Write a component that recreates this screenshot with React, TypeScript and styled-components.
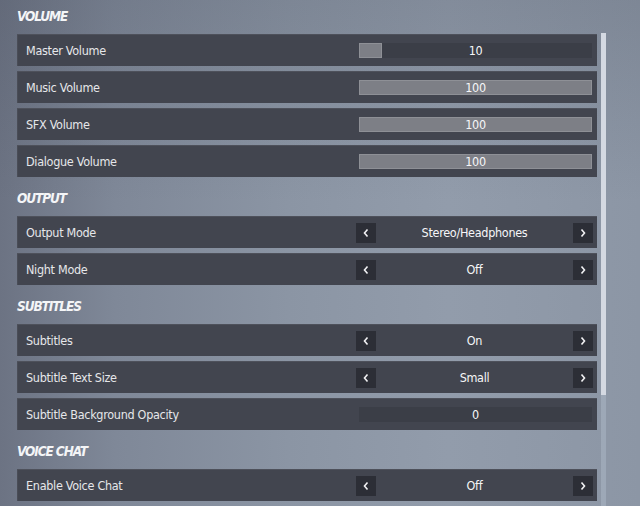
import React from 'react';
import styled, { createGlobalStyle } from 'styled-components';

const GlobalStyle = createGlobalStyle`
    html, body {
        margin: 0;
        padding: 0;
        width: 640px;
        height: 506px;
        overflow: hidden;
    }
    body {
        font-family: 'DejaVu Sans Condensed', 'DejaVu Sans', sans-serif;
        font-stretch: condensed;
    }
`;

const Page = styled.div`
    width: 640px;
    height: 506px;
    box-sizing: border-box;
    padding-left: 17px;
    display: flex;
    overflow: hidden;
    background:
        linear-gradient(180deg, rgba(60, 66, 80, 0.18) 0%, rgba(60, 66, 80, 0) 40%),
        linear-gradient(90deg, #6c7383 0%, #7f8898 18%, #8b95a4 45%, #929cab 70%, #8c96a5 100%);
`;

const Content = styled.div`
    width: 580px;
    display: flex;
    flex-direction: column;
`;

const Section = styled.section`
    display: flex;
    flex-direction: column;
    gap: 5px;

    & + & {
        margin-top: 5px;
    }
`;

const Heading = styled.h2`
    margin: 0 0 -5px;
    height: 34px;
    padding-bottom: 2px;
    box-sizing: border-box;
    display: flex;
    align-items: center;
    font-size: 13.5px;
    font-weight: 700;
    font-style: italic;
    letter-spacing: -1.1px;
    color: #f4f5f7;
    text-transform: uppercase;
`;

const Row = styled.div`
    height: 32px;
    box-sizing: border-box;
    display: flex;
    align-items: center;
    padding: 0 4px 0 9px;
    background: #42454f;
    border-top: 1px solid #4e515b;
    box-shadow: inset 1px 0 0 #4a4d57;
`;

const Label = styled.span`
    flex: 1;
    font-size: 12.5px;
    letter-spacing: -0.3px;
    color: #e6e7ea;
`;

const Control = styled.div`
    width: 237px;
    height: 20px;
    display: flex;
    align-items: center;
`;

const Track = styled.div`
    position: relative;
    flex: 1;
    margin: 0 1px 0 3px;
    height: 15px;
    background: #3b3e47;
    display: flex;
    align-items: center;
    justify-content: center;
`;

const Fill = styled.div`
    position: absolute;
    left: 0;
    top: 0;
    bottom: 0;
    background: #7d7f86;
    box-shadow: inset 0 0 0 1px #8e9096;
`;

const Value = styled.span<{ $flex?: boolean }>`
    position: relative;
    ${(p) => (p.$flex ? 'flex: 1; text-align: center;' : '')}
    font-size: 12.5px;
    letter-spacing: -0.3px;
    color: #f6f6f8;
`;

const ArrowButton = styled.div`
    width: 20px;
    height: 20px;
    background: #2c2e36;
    display: flex;
    align-items: center;
    justify-content: center;
`;

const ScrollTrack = styled.div`
    margin: 33px 0 0 4px;
    width: 5px;
    height: 473px;
    background: rgba(190, 200, 215, 0.35);
    display: flex;
    flex-direction: column;
`;

const ScrollThumb = styled.div`
    height: 362px;
    background: #d4d9e2;
`;

const Chevron = ({ dir }: { dir: 'left' | 'right' }) => (
    <svg width="8" height="10" viewBox="0 0 8 10">
        <path
            d={dir === 'left' ? 'M5.5 1.5 L2.5 5 L5.5 8.5' : 'M2.5 1.5 L5.5 5 L2.5 8.5'}
            fill="none"
            stroke="#f2f2f4"
            strokeWidth="1.6"
        />
    </svg>
);

type Item =
    | { label: string; kind: 'slider'; value: number; max: number }
    | { label: string; kind: 'select'; value: string };

const sections: { title: string; items: Item[] }[] = [
    {
        title: 'Volume',
        items: [
            { label: 'Master Volume', kind: 'slider', value: 10, max: 100 },
            { label: 'Music Volume', kind: 'slider', value: 100, max: 100 },
            { label: 'SFX Volume', kind: 'slider', value: 100, max: 100 },
            { label: 'Dialogue Volume', kind: 'slider', value: 100, max: 100 }
        ]
    },
    {
        title: 'Output',
        items: [
            { label: 'Output Mode', kind: 'select', value: 'Stereo/Headphones' },
            { label: 'Night Mode', kind: 'select', value: 'Off' }
        ]
    },
    {
        title: 'Subtitles',
        items: [
            { label: 'Subtitles', kind: 'select', value: 'On' },
            { label: 'Subtitle Text Size', kind: 'select', value: 'Small' },
            { label: 'Subtitle Background Opacity', kind: 'slider', value: 0, max: 100 }
        ]
    },
    {
        title: 'Voice Chat',
        items: [{ label: 'Enable Voice Chat', kind: 'select', value: 'Off' }]
    }
];

const SettingRow = ({ item }: { item: Item }) => (
    <Row>
        <Label>{item.label}</Label>
        <Control>
            {item.kind === 'slider' ? (
                <Track>
                    <Fill style={{ width: `${(item.value / item.max) * 100}%` }} />
                    <Value>{item.value}</Value>
                </Track>
            ) : (
                <>
                    <ArrowButton>
                        <Chevron dir="left" />
                    </ArrowButton>
                    <Value $flex>{item.value}</Value>
                    <ArrowButton>
                        <Chevron dir="right" />
                    </ArrowButton>
                </>
            )}
        </Control>
    </Row>
);

export default function App() {
    return (
        <>
            <GlobalStyle />
            <Page>
                <Content>
                    {sections.map((section) => (
                        <Section key={section.title}>
                            <Heading>{section.title}</Heading>
                            {section.items.map((item) => (
                                <SettingRow key={item.label} item={item} />
                            ))}
                        </Section>
                    ))}
                </Content>
                <ScrollTrack>
                    <ScrollThumb />
                </ScrollTrack>
            </Page>
        </>
    );
}
